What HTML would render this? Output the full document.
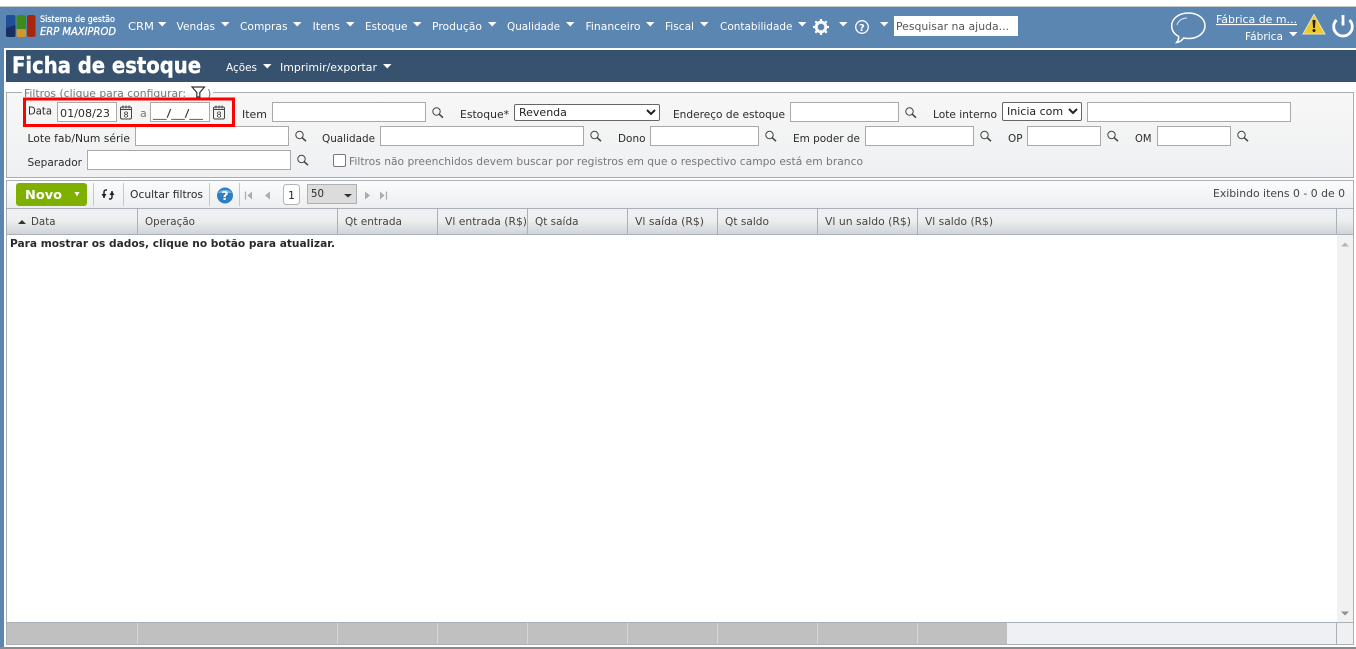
<!DOCTYPE html>
<html lang="pt"><head><meta charset="utf-8"><title>Ficha de estoque</title>
<style>
html,body{margin:0;padding:0;width:1356px;height:649px;overflow:hidden;background:#fff;font-family:"DejaVu Sans","Liberation Sans",sans-serif;font-size:11px}
.a{position:absolute;box-sizing:border-box}
input.a{border:1px solid #a9a9a9;background:#fff;margin:0;padding:0;outline:0;height:20px;top:102px}
select.a{margin:0;font:11px "DejaVu Sans",sans-serif;color:#222;background:#fff;border:1px solid #666;border-radius:2px;padding:0}
svg{position:absolute;left:0;top:0}
svg text{font-family:"DejaVu Sans","Liberation Sans",sans-serif;font-size:11px;fill:#2a2a2a}
.n text{fill:#fff}
.f{fill:#fff}
</style></head><body>
<div class="a" style="left:0;top:6px;width:1356px;height:1px;background:#c8c8c8"></div>
<div class="a" style="left:0;top:7px;width:1356px;height:41px;background:#5c86b2"></div>
<div class="a" style="left:0;top:48px;width:4px;height:599px;background:#5c86b2"></div>
<div class="a" style="left:6px;top:50px;width:1350px;height:32px;background:#36526f"></div>
<div class="a" style="left:6px;top:92px;width:1348px;height:86px;border:1px solid #aaadb0;background:linear-gradient(#f7f7f7,#eff0f2)"></div>
<div class="a" style="left:22px;top:86px;width:191px;height:7px;background:#fff"></div>
<div class="a" style="left:6px;top:180px;width:1348px;height:465px;border:1px solid #a9b0b8;border-bottom-width:2px;background:#fff"></div>
<div class="a" style="left:7px;top:181px;width:1346px;height:27px;background:linear-gradient(#fcfcfc,#eceef0)"></div>
<div class="a" style="left:7px;top:208px;width:1346px;height:27px;border-top:1px solid #a9b0b8;border-bottom:1px solid #a9b0b8;background:linear-gradient(#f0f1f3,#eceef0 45%,#d0d3d8)"></div>
<div class="a" style="left:1337px;top:235px;width:16px;height:387px;background:#f1f1f1"></div>
<div class="a" style="left:7px;top:622px;width:1346px;height:22px;border-top:1px solid #a9b0b8;background:#eff0f2"></div>
<div class="a" style="left:7px;top:623px;width:1000px;height:21px;background:#c0c0c0"></div>
<div class="a" style="left:0;top:647px;width:1356px;height:2px;background:#8a8a8a"></div>
<input class="a" style="left:57px;width:60px"><input class="a" style="left:150px;width:60px">
<input class="a" style="left:272px;width:154px"><input class="a" style="left:790px;width:109px"><input class="a" style="left:1087px;width:204px">
<select class="a" style="left:514px;top:104px;width:146px;height:17px"><option>Revenda</option></select>
<select class="a" style="left:1002px;top:102px;width:80px;height:19px"><option>Inicia com</option></select>
<input class="a" style="top:126px;left:135px;width:154px"><input class="a" style="top:126px;left:380px;width:204px"><input class="a" style="top:126px;left:650px;width:109px"><input class="a" style="top:126px;left:865px;width:109px"><input class="a" style="top:126px;left:1027px;width:74px"><input class="a" style="top:126px;left:1157px;width:74px">
<input class="a" style="top:150px;left:87px;width:204px">
<input class="a" type="checkbox" style="left:333px;top:154px;width:13px;height:13px;appearance:none;border:1px solid #777;border-radius:2px">
<input class="a" style="left:894px;top:16px;width:124px;height:20px;border:0">

<svg width="1356" height="649" viewBox="0 0 1356 649" xmlns="http://www.w3.org/2000/svg">
<defs>
<g id="c"><path d="M0 0h8.5l-4.25 4.5z" fill="#fff"/></g>
<g id="l" fill="none" stroke="#444"><circle cx="4.5" cy="4.5" r="3.7" stroke-width="1"/><path d="M7.3 7.3l3.7 3.4" stroke-width="1.600"/></g>
<g id="k"><rect x=".5" y="1.5" width="11" height="12" rx="1.5" fill="#f4f4f4" stroke="#444"/><path d="M1 4h10M3 0v3M6 0v3M9 0v3" stroke="#444"/><text x="3.5" y="12" style="font-size:8px;fill:#333">8</text></g>
</defs>
<!-- logo -->
<rect x="6" y="15" width="9.500" height="22" rx="2" fill="#1f4f99"/><path d="M6 28l9.500-3v10a2 2 0 0 1-2 2H8a2 2 0 0 1-2-2z" fill="#17305f"/>
<rect x="16.500" y="15" width="9.500" height="14" rx="2" fill="#3d8a1d"/><rect x="16.500" y="29" width="9.500" height="8" rx="2" fill="#d09a2b"/>
<rect x="27" y="15" width="8.500" height="22" rx="2" fill="#a8280f"/>
<text x="40" y="22" textLength="75" lengthAdjust="spacingAndGlyphs" stroke="#fff" stroke-width=".25" style="font-size:9px;fill:#fff">Sistema de gestão</text>
<text x="40" y="35" textLength="76" lengthAdjust="spacingAndGlyphs" stroke="#fff" stroke-width=".3" style="font-size:11px;fill:#fff;font-style:italic">ERP MAXIPROD</text>
<!-- nav -->
<g class="n">
<text x="128" y="30" textLength="26" lengthAdjust="spacingAndGlyphs">CRM</text>
<text x="176.500" y="30" textLength="38.500" lengthAdjust="spacingAndGlyphs">Vendas</text>
<text x="240" y="30" textLength="47.500" lengthAdjust="spacingAndGlyphs">Compras</text>
<text x="312.500" y="30" textLength="27.500" lengthAdjust="spacingAndGlyphs">Itens</text>
<text x="365" y="30" textLength="42.500" lengthAdjust="spacingAndGlyphs">Estoque</text>
<text x="432" y="30" textLength="50" lengthAdjust="spacingAndGlyphs">Produção</text>
<text x="507" y="30" textLength="53" lengthAdjust="spacingAndGlyphs">Qualidade</text>
<text x="585.500" y="30" textLength="55" lengthAdjust="spacingAndGlyphs">Financeiro</text>
<text x="665" y="30" textLength="29" lengthAdjust="spacingAndGlyphs">Fiscal</text>
<text x="720" y="30" textLength="72.500" lengthAdjust="spacingAndGlyphs">Contabilidade</text>
<text x="1216" y="23" textLength="81" lengthAdjust="spacingAndGlyphs" text-decoration="underline">Fábrica de m...</text>
<text x="1245" y="40" textLength="38" lengthAdjust="spacingAndGlyphs">Fábrica</text>
<text x="226" y="71" textLength="31" lengthAdjust="spacingAndGlyphs">Ações</text>
<text x="280" y="71" textLength="97" lengthAdjust="spacingAndGlyphs">Imprimir/exportar</text>
<text x="12" y="73" textLength="189" lengthAdjust="spacingAndGlyphs" stroke="#fff" stroke-width=".4" style="font-size:22px;font-weight:bold">Ficha de estoque</text>
</g>
<use href="#c" x="158" y="22"/><use href="#c" x="221" y="22"/><use href="#c" x="293" y="22"/><use href="#c" x="346" y="22"/><use href="#c" x="413" y="22"/><use href="#c" x="488" y="22"/><use href="#c" x="566" y="22"/><use href="#c" x="646" y="22"/><use href="#c" x="700" y="22"/><use href="#c" x="798" y="22"/><use href="#c" x="839" y="22"/><use href="#c" x="880" y="22"/><use href="#c" x="1289" y="32"/><use href="#c" x="263" y="64"/><use href="#c" x="383" y="64"/>
<!-- gear -->
<circle cx="821" cy="27" r="5" fill="none" stroke="#fff" stroke-width="2.500"/>
<path d="M821 19v16M813 27h16M815.300 21.300l11.400 11.400M826.700 21.300l-11.400 11.400" stroke="#fff" stroke-width="2.200"/>
<circle cx="821" cy="27" r="3.300" fill="#5c86b2"/>
<!-- help -->
<circle cx="862" cy="27" r="6.300" fill="none" stroke="#fff" stroke-width="1.300"/>
<text x="859" y="31" style="font-size:10px;fill:#fff;font-weight:bold">?</text>
<text x="896" y="30" textLength="113" lengthAdjust="spacingAndGlyphs" style="fill:#555">Pesquisar na ajuda...</text>
<!-- chat -->
<path d="M1188.500 13c9.500 0 16.500 5.600 16.500 12.800S1198 38.500 1188.500 38.500c-1.700 0-3.300-.2-4.800-.5-1.500 2-4 4-7 4.500 1.300-1.700 2-3.600 2-6-4.300-2.300-7-6.200-7-10.700 0-7.200 7-12.800 16.800-12.800z" fill="none" stroke="#fff" stroke-width="1.500"/>
<path d="M1177 25c1-4 5-7 10-7" fill="none" stroke="#dfe8f2" stroke-width="1"/>
<!-- warning -->
<path d="M1314 14.500l11 19.500h-22z" fill="#eecb2a" stroke="#e8e2c0"/>
<path d="M1312.500 20h3l-.6 8h-1.800z" fill="#1a1a1a"/><circle cx="1314" cy="30.500" r="1.500" fill="#1a1a1a"/>
<!-- power -->
<path d="M1336.500 20a9.300 9.300 0 1 0 13 0" fill="none" stroke="#fff" stroke-width="2.800"/>
<path d="M1343 15v10.500" stroke="#fff" stroke-width="2.800"/>
<!-- legend -->
<text x="24" y="97" textLength="162" lengthAdjust="spacingAndGlyphs" style="fill:#777">Filtros (clique para configurar:</text>
<path d="M192 87h12.500l-4.700 5.500v4.500h-3v-4.500z" fill="none" stroke="#333" stroke-width="1.200"/>
<text x="207" y="97" style="fill:#777">)</text>
<!-- row1 -->
<text x="28" y="114.500" textLength="24" lengthAdjust="spacingAndGlyphs">Data</text>
<text x="60" y="117" textLength="50" lengthAdjust="spacingAndGlyphs">01/08/23</text>
<use href="#k" x="120" y="105.500"/>
<text x="140" y="117" style="fill:#777">a</text>
<text x="153" y="117" textLength="50" lengthAdjust="spacingAndGlyphs">__/__/__</text>
<use href="#k" x="213" y="105.500"/>
<text x="242" y="118" textLength="25" lengthAdjust="spacingAndGlyphs">Item</text>
<use href="#l" x="432" y="107"/>
<text x="460" y="118" textLength="49" lengthAdjust="spacingAndGlyphs">Estoque*</text>
<text x="673" y="118" textLength="112" lengthAdjust="spacingAndGlyphs">Endereço de estoque</text>
<use href="#l" x="905" y="107"/>
<text x="933" y="118" textLength="64" lengthAdjust="spacingAndGlyphs">Lote interno</text>
<!-- row2 -->
<text x="27.500" y="142" textLength="102.500" lengthAdjust="spacingAndGlyphs">Lote fab/Num série</text>
<use href="#l" x="295" y="130.500"/>
<text x="322" y="142" textLength="53" lengthAdjust="spacingAndGlyphs">Qualidade</text>
<use href="#l" x="590" y="130.500"/>
<text x="618" y="142" textLength="27.500" lengthAdjust="spacingAndGlyphs">Dono</text>
<use href="#l" x="765" y="130.500"/>
<text x="793" y="142" textLength="67" lengthAdjust="spacingAndGlyphs">Em poder de</text>
<use href="#l" x="980" y="130.500"/>
<text x="1008" y="142" textLength="14.500" lengthAdjust="spacingAndGlyphs">OP</text>
<use href="#l" x="1107" y="130.500"/>
<text x="1135" y="142" textLength="16.500" lengthAdjust="spacingAndGlyphs">OM</text>
<use href="#l" x="1237" y="130.500"/>
<!-- row3 -->
<text x="27.500" y="166" textLength="54.500" lengthAdjust="spacingAndGlyphs">Separador</text>
<use href="#l" x="297" y="154.500"/>
<text x="349" y="165" textLength="514" lengthAdjust="spacingAndGlyphs" style="fill:#777">Filtros não preenchidos devem buscar por registros em que o respectivo campo está em branco</text>
<!-- red box -->
<rect x="24.500" y="99" width="209" height="26.500" fill="none" stroke="#f00" stroke-width="3"/>
<!-- toolbar -->
<rect x="16" y="183" width="71" height="23" rx="3" fill="#7fb000"/>
<text x="25" y="199" textLength="37" lengthAdjust="spacingAndGlyphs" style="font-size:12px;font-weight:bold;fill:#fff">Novo</text>
<path d="M74.500 192h5l-2.500 4.500z" fill="#fff"/>
<path d="M93.500 183v23M123.500 183v23M209.500 183v23M239.500 183v23" stroke="#c4c7cb"/>
<path d="M104 198v-6a2 2 0 0 1 2-2h1M112 191v6a2 2 0 0 1-2 2h-1" fill="none" stroke="#222" stroke-width="1.500"/>
<path d="M101.500 194h5l-2.500 4zM109.500 195h5l-2.500-4z" fill="#222"/>
<text x="130" y="198" textLength="73" lengthAdjust="spacingAndGlyphs">Ocultar filtros</text>
<circle cx="225" cy="195.500" r="8" fill="#2f7ec4"/><path d="M218 193a7.500 5 0 0 1 14 0z" fill="#6fb0e4"/>
<text x="221.500" y="200" style="font-size:12px;font-weight:bold;fill:#fff">?</text>
<path d="M245.500 191.500v8" stroke="#a9adb2" stroke-width="1.300"/><path d="M252 191.500v8l-4.500-4zM270 191.500v8l-5-4z" fill="#a9adb2"/>
<rect x="283.500" y="184.500" width="16" height="20" rx="3" fill="#fff" stroke="#b5b5b5"/>
<text x="288" y="199">1</text>
<rect x="307.500" y="184.500" width="49" height="19" fill="#dcdcdc" stroke="#b0b0b0"/>
<text x="311" y="197" textLength="13" lengthAdjust="spacingAndGlyphs">50</text>
<path d="M344 194h8l-4 3.500z" fill="#333"/>
<path d="M365 191.500v8l5-4zM380 191.500v8l4.500-4z" fill="#a9adb2"/><path d="M386.500 191.500v8" stroke="#a9adb2" stroke-width="1.300"/>
<text x="1213" y="197" textLength="132" lengthAdjust="spacingAndGlyphs" style="fill:#444">Exibindo itens 0 - 0 de 0</text>
<!-- header -->
<path d="M137.500 209v26M337.500 209v26M437.500 209v26M527.500 209v26M627.500 209v26M717.500 209v26M817.500 209v26M917.500 209v26M1336.500 209v26" stroke="#a9b0b8"/>
<path d="M18 224l4-4 4 4z" fill="#333"/>
<g>
<text x="31" y="225" textLength="24.500" lengthAdjust="spacingAndGlyphs" style="fill:#444">Data</text>
<text x="145" y="225" textLength="50" lengthAdjust="spacingAndGlyphs" style="fill:#444">Operação</text>
<text x="345" y="225" textLength="57" lengthAdjust="spacingAndGlyphs" style="fill:#444">Qt entrada</text>
<text x="445" y="225" textLength="82" lengthAdjust="spacingAndGlyphs" style="fill:#444">Vl entrada (R$)</text>
<text x="535" y="225" textLength="43.500" lengthAdjust="spacingAndGlyphs" style="fill:#444">Qt saída</text>
<text x="635" y="225" textLength="69" lengthAdjust="spacingAndGlyphs" style="fill:#444">Vl saída (R$)</text>
<text x="725" y="225" textLength="44" lengthAdjust="spacingAndGlyphs" style="fill:#444">Qt saldo</text>
<text x="825" y="225" textLength="86" lengthAdjust="spacingAndGlyphs" style="fill:#444">Vl un saldo (R$)</text>
<text x="925" y="225" textLength="68" lengthAdjust="spacingAndGlyphs" style="fill:#444">Vl saldo (R$)</text>
</g>
<text x="10" y="247" textLength="325" lengthAdjust="spacingAndGlyphs" style="font-weight:bold">Para mostrar os dados, clique no botão para atualizar.</text>
<!-- scrollbar arrows -->
<path d="M1341 246.500l4-4 4 4z" fill="#b5b5b5"/><path d="M1341 611.500h8l-4 4z" fill="#8f8f8f"/>
<!-- footer separators -->
<path d="M137.500 623v21M337.500 623v21M437.500 623v21M527.500 623v21M627.500 623v21M717.500 623v21M817.500 623v21M917.500 623v21" stroke="#d6d6d6"/>
<path d="M1336.500 623v21" stroke="#a9b0b8"/>
</svg>
</body></html>
